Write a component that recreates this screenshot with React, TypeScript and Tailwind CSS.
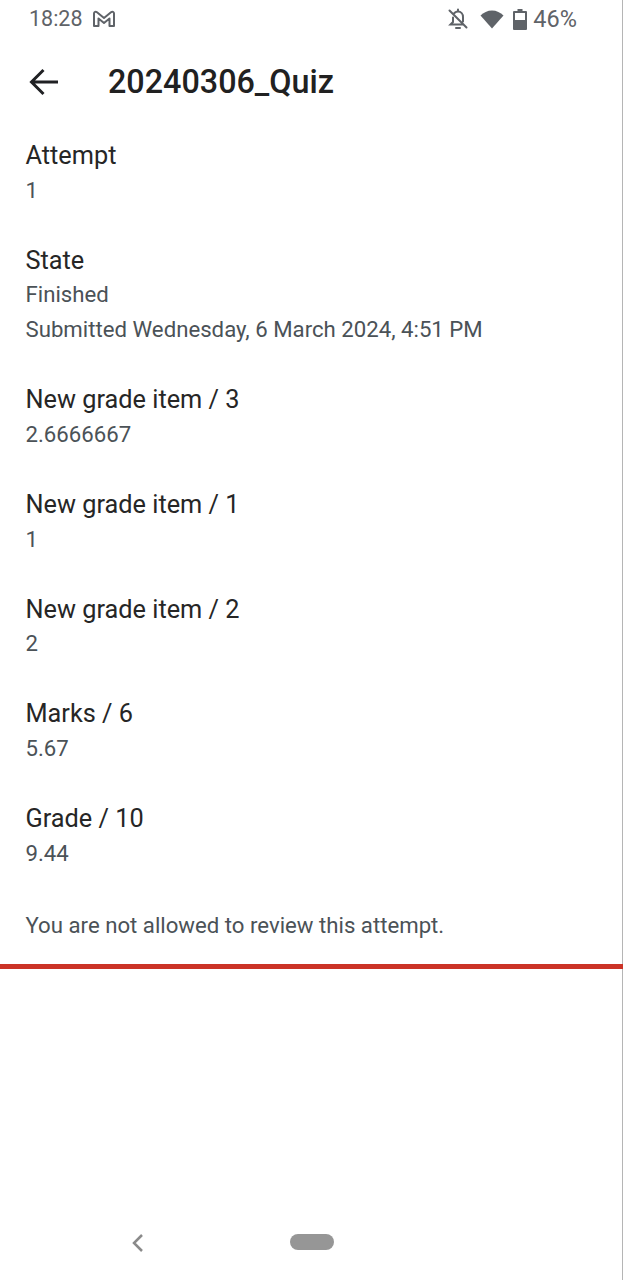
const rows = [
  { label: "Attempt", values: ["1"] },
  { label: "State", values: ["Finished", "Submitted Wednesday, 6 March 2024, 4:51 PM"] },
  { label: "New grade item / 3", values: ["2.6666667"] },
  { label: "New grade item / 1", values: ["1"] },
  { label: "New grade item / 2", values: ["2"] },
  { label: "Marks / 6", values: ["5.67"] },
  { label: "Grade / 10", values: ["9.44"] },
]

function StatusBar() {
  return (
    <div className="flex h-[38px] items-center justify-between pl-[29px] pr-[45px] text-[21.500px] text-[#5f6368]">
      <div className="flex items-center gap-[9px]">
        <span>18:28</span>
        <svg width="24" height="18" viewBox="0 0 24 18" fill="none" stroke="#5f6368" strokeWidth="2" strokeLinejoin="round">
          <path d="M2 16V3.500C2 1.800 3.600 1.200 5 2.300L12 8l7-5.700c1.400-1.100 3-.5 3 1.200V16h-4.500V8.500L12 13 6.500 8.500V16z" />
        </svg>
      </div>
      <div className="flex items-center">
        <svg width="24" height="24" viewBox="0 0 24 24" fill="none" stroke="#5f6368" strokeWidth="2" strokeLinecap="round" className="mr-[10px]">
          <path d="M12 2.500v2M7.500 7.500C8.300 5.700 10 4.500 12 4.500c3 0 5 2.400 5 5.500v4.500M7 10.500v4.500l-2.500 2.500H17M10 21h4M3.500 3.500l17 17" />
        </svg>
        <svg width="24" height="19" viewBox="0 0 24 19" fill="#5f6368" className="mr-[9px]">
          <path d="M12 18.500 .500 5.500C3.500 2.500 7.500 .5 12 .5s8.500 2 11.500 5z" />
        </svg>
        <svg width="14" height="21" viewBox="0 0 14 21" className="mr-[6px]">
          <path d="M4.500 0h5v2H13a1 1 0 0 1 1 1v17a1 1 0 0 1-1 1H1a1 1 0 0 1-1-1V3a1 1 0 0 1 1-1h3.500z" fill="#5f6368" />
          <rect x="2" y="4" width="10" height="7" fill="#fff" />
        </svg>
        <span className="pt-px text-[23.500px]">46%</span>
      </div>
    </div>
  )
}

export default function App() {
  return (
    <div className="flex h-[1280px] w-[623px] flex-col border-r border-[#b5b5b5] bg-white font-['Roboto',sans-serif]">
      <StatusBar />
      <div className="flex h-[88px] items-center pl-[28px]">
        <svg width="32" height="32" viewBox="0 0 32 32" fill="none" stroke="#202124" strokeWidth="3" className="mr-[48px]">
          <path d="M30 16H4M15.500 4 3.500 16l12 12" />
        </svg>
        <h1 className="text-[32.300px] font-medium text-[#212121]">20240306_Quiz</h1>
      </div>
      <div className="flex flex-col gap-[35.070px] pl-[25.500px] pr-[26px] pt-[12px]">
        {rows.map((row) => (
          <div key={row.label}>
            <div className="text-[25.300px] leading-[35px] text-[#262626]">{row.label}</div>
            {row.values.map((v, i) => (
              <div key={v} className={i === 0 ? "-mt-[0.400px] text-[22.200px] leading-[35px] text-[#4b5257]" : "text-[22.200px] leading-[35px] text-[#4b5257]"}>{v}</div>
            ))}
          </div>
        ))}
      </div>
      <div className="pl-[25.500px] pr-[26px] pt-[37.100px] text-[22.200px] leading-[35px] text-[#4b5257]">
        You are not allowed to review this attempt.
      </div>
      <div className="mt-[21px] -mr-px h-[5px] bg-[#cb3327]" />
      <div className="mt-auto flex h-[76px] items-start pt-[26px]">
        <svg width="14" height="20" viewBox="0 0 14 20" fill="none" stroke="#8a8a8a" strokeWidth="2.500" className="ml-[130px] mt-[3px]">
          <path d="M12 2 4 10l8 8" />
        </svg>
        <div className="ml-[146px] mt-[4px] h-[16px] w-[44px] rounded-full bg-[#969696]" />
      </div>
    </div>
  )
}
